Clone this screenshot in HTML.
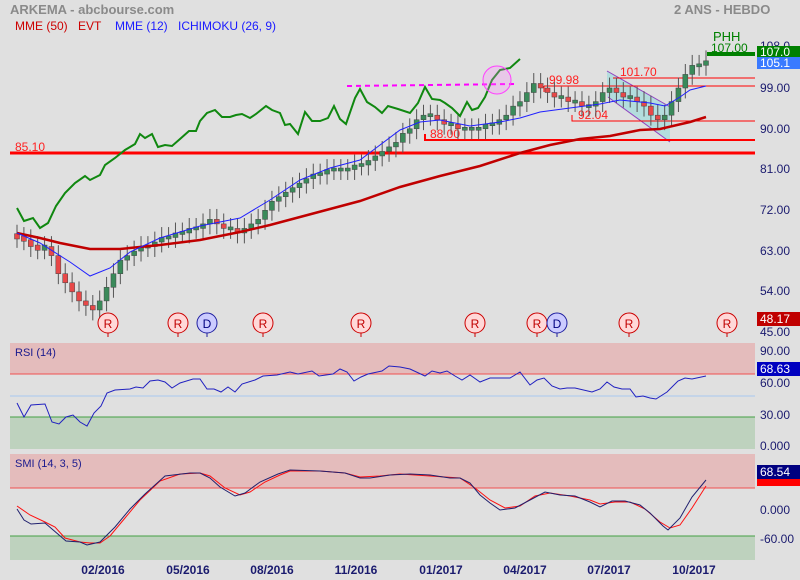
<!DOCTYPE html>
<html><head><meta charset="utf-8"><style>
html,body{margin:0;padding:0;background:#e0e0e0;}
svg{display:block;font-family:"Liberation Sans",Arial,sans-serif;}
</style></head><body>
<svg id="s" width="800" height="580" xmlns="http://www.w3.org/2000/svg">
<rect width="800" height="580" fill="#e0e0e0"/>
<text x="10" y="14" font-size="13" fill="#8a8a8a" font-weight="bold">ARKEMA - abcbourse.com</text>
<text x="674" y="14" font-size="13" fill="#8a8a8a" font-weight="bold">2 ANS - HEBDO</text>
<text x="15" y="30" font-size="12" fill="#cc0000">MME (50)</text>
<text x="78" y="30" font-size="12" fill="#cc0000">EVT</text>
<text x="115" y="30" font-size="12" fill="#1a1aff">MME (12)</text>
<text x="178" y="30" font-size="12" fill="#1a1aff">ICHIMOKU (26, 9)</text>

<rect x="10" y="343" width="745" height="31" fill="#e4bcbc"/>
<rect x="10" y="417" width="745" height="32" fill="#bed2be"/>
<line x1="10" y1="374" x2="755" y2="374" stroke="#f05050" stroke-width="1"/>
<line x1="10" y1="396" x2="755" y2="396" stroke="#a8c8f0" stroke-width="1"/>
<line x1="10" y1="417" x2="755" y2="417" stroke="#44a044" stroke-width="1"/>
<rect x="10" y="454" width="745" height="34" fill="#e4bcbc"/>
<rect x="10" y="536" width="745" height="24" fill="#bed2be"/>
<line x1="10" y1="488" x2="755" y2="488" stroke="#f05050" stroke-width="1"/>
<line x1="10" y1="536" x2="755" y2="536" stroke="#44a044" stroke-width="1"/>
<text x="15" y="356" font-size="11" fill="#1a1a8e">RSI (14)</text>
<text x="15" y="467" font-size="11" fill="#1a1a8e">SMI (14, 3, 5)</text>

<polygon points="607,71 670,107 670,142 607,97" fill="#a8dcdc" opacity="0.8"/>
<line x1="607" y1="71" x2="672" y2="108" stroke="#9040c0" stroke-width="1"/>
<line x1="608" y1="97" x2="670" y2="142" stroke="#9040c0" stroke-width="1"/>

<line x1="10" y1="153" x2="755" y2="153" stroke="#ff0000" stroke-width="3"/>
<text x="15" y="151" font-size="12" fill="#ff2020">85.10</text>
<polyline points="425,134 425,140 755,140" fill="none" stroke="#ff0000" stroke-width="2"/>
<text x="430" y="138" font-size="12" fill="#ff2020">88.00</text>
<polyline points="572,115 572,121 755,121" fill="none" stroke="#ff0000" stroke-width="1"/>
<text x="578" y="119" font-size="12" fill="#ff2020">92.04</text>
<line x1="544" y1="86" x2="755" y2="86" stroke="#ff0000" stroke-width="1"/>
<line x1="544" y1="86" x2="544" y2="92" stroke="#ff0000"/>
<text x="549" y="84" font-size="12" fill="#ff2020">99.98</text>
<line x1="613" y1="78" x2="755" y2="78" stroke="#ff0000" stroke-width="1"/>
<text x="620" y="76" font-size="12" fill="#ff2020">101.70</text>
<line x1="707" y1="54" x2="755" y2="54" stroke="#008000" stroke-width="4"/>
<text x="713" y="41" font-size="13" fill="#008000">PHH</text>
<text x="711" y="52" font-size="12" fill="#008000">107.00</text>

<g id="candles"></g>

<polyline fill="none" stroke="#c00000" stroke-width="2.5" points="17,233 40,238 60,243 90,249 120,249 160,245 200,240 240,232 270,225 300,217 330,209 360,201 400,187 440,176 480,166 520,153 550,145 580,139 610,136 640,130 660,129 690,122 706,117"/>
<polyline fill="none" stroke="#2020ff" stroke-width="1" points="17,233 40,243 70,262 90,276 110,268 130,252 160,238 200,226 240,218 270,200 300,180 330,168 360,160 380,145 400,130 420,122 440,120 470,126 500,122 520,118 540,112 570,108 600,104 620,100 650,103 665,106 680,97 690,90 706,86"/>
<polyline fill="none" stroke="#108810" stroke-width="2" points="17,208 24,221 33,218 40,228 48,223 56,206 65,193 75,183 85,176 90,180 100,175 105,165 115,158 125,150 135,144 140,134 145,138 152,134 158,147 165,145 172,146 180,139 189,131 196,131 200,121 207,113 215,110 222,117 230,117 236,115 242,114 250,118 256,114 266,106 272,110 280,113 285,125 290,124 298,134 305,112 312,121 320,121 328,118 334,106 340,119 346,124 355,98 360,89 367,102 375,107 382,113 388,106 398,109 410,113 418,103 425,87 432,99 440,100 445,103 452,108 460,116 467,102 472,110 478,108 485,97 492,80 500,70 510,68 520,59"/>
<line x1="347" y1="86" x2="515" y2="84" stroke="#ff00ff" stroke-width="2" stroke-dasharray="5,4"/>
<ellipse cx="497" cy="80" rx="14" ry="14" fill="#ff80ff" fill-opacity="0.25" stroke="#ff40ff" stroke-width="1"/>

<g font-size="12" text-anchor="middle">
<g fill="#ffd8d8" stroke="#cc0000">
<circle cx="108" cy="323" r="10"/><circle cx="178" cy="323" r="10"/><circle cx="263" cy="323" r="10"/><circle cx="361" cy="323" r="10"/><circle cx="475" cy="323" r="10"/><circle cx="537" cy="323" r="10"/><circle cx="629" cy="323" r="10"/><circle cx="727" cy="323" r="10"/>
<path d="M108 333v4M178 333v4M263 333v4M361 333v4M475 333v4M537 333v4M629 333v4M727 333v4"/>
</g>
<g fill="#ccccff" stroke="#2020a0">
<circle cx="207" cy="323" r="10"/><circle cx="557" cy="323" r="10"/>
<path d="M207 333v4M557 333v4"/>
</g>
<g fill="#c00000"><text x="108" y="328">R</text><text x="178" y="328">R</text><text x="263" y="328">R</text><text x="361" y="328">R</text><text x="475" y="328">R</text><text x="537" y="328">R</text><text x="629" y="328">R</text><text x="727" y="328">R</text></g>
<g fill="#000080"><text x="207" y="328">D</text><text x="557" y="328">D</text></g>
</g>

<polyline fill="none" stroke="#2020c0" stroke-width="1" points="17,403 24,417 31,405 45,404 52,422 59,424 66,417 73,415 80,422 87,426 94,413 101,406 107,393 115,390 130,389 136,387 143,388 150,381 158,380 165,382 172,388 180,383 193,379 200,379 207,389 214,389 221,392 228,387 235,392 242,384 255,380 263,376 277,375 290,372 298,374 312,371 319,376 333,374 340,369 347,372 354,381 361,377 368,374 382,371 389,366 400,367 410,369 425,376 432,371 440,373 447,371 455,376 462,380 470,375 480,382 490,378 500,378 510,378 520,372 530,385 537,380 544,378 552,386 560,389 567,388 575,388 592,392 600,389 607,382 614,387 622,389 630,389 636,397 643,396 650,398 656,399 667,392 678,381 685,378 692,379 706,376"/>
<polyline fill="none" stroke="#ff1010" stroke-width="1" points="17,506 30,515 45,522 55,527 65,538 80,542 90,543 100,543 110,536 125,518 140,500 160,481 180,474 200,473 210,476 225,488 240,495 250,492 265,482 280,475 290,471 320,471 345,473 360,477 380,476 400,474 430,476 460,478 475,488 490,500 505,508 520,506 535,496 550,493 570,496 590,500 600,504 615,502 630,502 645,509 660,522 670,528 680,525 692,508 706,486"/>
<polyline fill="none" stroke="#20206e" stroke-width="1" points="17,509 24,520 31,524 45,523 59,535 66,541 80,542 87,545 100,542 115,527 130,509 145,494 165,476 190,473 200,473 210,478 220,487 235,496 245,493 260,482 278,474 290,470 320,471 345,473 360,478 370,478 390,475 410,474 430,475 450,478 460,478 470,483 480,495 490,503 500,510 515,508 530,500 545,492 560,495 575,496 590,502 600,507 612,501 625,501 640,505 650,513 663,526 668,530 680,518 692,497 706,480"/>

<g font-size="12" fill="#1a1a6e">
<text x="760" y="50">108.0</text>
<text x="760" y="92">99.00</text>
<text x="760" y="133">90.00</text>
<text x="760" y="173">81.00</text>
<text x="760" y="214">72.00</text>
<text x="760" y="255">63.00</text>
<text x="760" y="295">54.00</text>
<text x="760" y="336">45.00</text>
<text x="760" y="355">90.00</text>
<text x="760" y="387">60.00</text>
<text x="760" y="419">30.00</text>
<text x="760" y="450">0.000</text>
<text x="760" y="514">0.000</text>
<text x="760" y="543">-60.00</text>
</g>
<rect x="757" y="46" width="43" height="11" fill="#008000"/>
<text x="760" y="56" font-size="12" fill="#fff">107.0</text>
<rect x="757" y="57" width="43" height="12" fill="#3a7aff"/>
<text x="760" y="67" font-size="12" fill="#fff">105.1</text>
<rect x="757" y="312" width="43" height="14" fill="#c00000"/>
<text x="760" y="323" font-size="12" fill="#fff">48.17</text>
<rect x="757" y="362" width="43" height="14" fill="#0000c0"/>
<text x="760" y="373" font-size="12" fill="#fff">68.63</text>
<rect x="757" y="478" width="43" height="8" fill="#ff0000"/>
<rect x="757" y="465" width="43" height="14" fill="#000080"/>
<text x="760" y="476" font-size="12" fill="#fff">68.54</text>

<g font-size="12" fill="#1a1a6e" font-weight="bold" text-anchor="middle">
<text x="103" y="574">02/2016</text><text x="188" y="574">05/2016</text><text x="272" y="574">08/2016</text><text x="356" y="574">11/2016</text><text x="441" y="574">01/2017</text><text x="525" y="574">04/2017</text><text x="609" y="574">07/2017</text><text x="694" y="574">10/2017</text>
</g>
</svg>
<script>
var c=[66,65.5,64,63.5,64,62,58,56,54,52,51,50,52,55,58,61,62,63,64,64,65,66,66,67,67,68,68,69,70,69,68,68,67,68,69,70,72,74,75,76,77,78,79,80,80,81,81,81,81,82,82,83,84,85,86,87,89,90,92,93,93,92,91,91,90,90,90,90,91,91,92,93,95,96,98,100,99,98,97,97,96,96,95,95,96,98,99,98,97,97,96,95,93,92,93,96,99,102,104,104,105];
function Y(p){return 88+(99-p)*4.53;}
var n=c.length,dx=(706-17)/(n-1);
var h='',prev=66.5;
for(var i=0;i<n;i++){var x=17+i*dx,o=prev,cl=c[i];var up=cl>=o;var col=up?'#3a8a5a':'#e84848';
var hi=Math.max(o,cl)+2.3,lo=Math.min(o,cl)-2.3;
h+='<line x1="'+x+'" y1="'+Y(hi)+'" x2="'+x+'" y2="'+Y(lo)+'" stroke="#555" stroke-width="1"/>';
var t=Y(Math.max(o,cl)),b=Y(Math.min(o,cl));if(b-t<3){t-=1.5;b+=1.5;}
h+='<rect x="'+(x-2.5)+'" y="'+t+'" width="5" height="'+(b-t)+'" fill="'+col+'" stroke="#444" stroke-width="0.5"/>';
prev=cl;}
document.getElementById('candles').innerHTML=h;
</script>
</body></html>
